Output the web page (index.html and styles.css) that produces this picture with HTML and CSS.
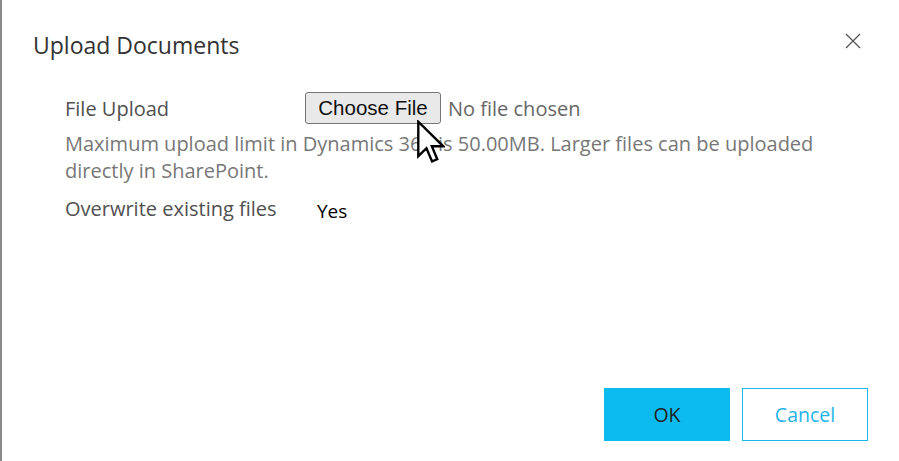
FILE: index.html
```html
<!DOCTYPE html>
<html>
<head>
<meta charset="utf-8">
<link rel="stylesheet" href="styles.css">
</head>
<body>
<div class="dialog">
  <div class="header">
    <h1 class="title">Upload Documents</h1>
    <button class="close" aria-label="Close">
      <svg width="16" height="16" viewBox="0 0 16 16"><path d="M1 1 L15 15 M15 1 L1 15" stroke="#555" stroke-width="1.3" fill="none"/></svg>
    </button>
  </div>
  <div class="body">
    <div class="row upload-row">
      <div class="label">File Upload</div>
      <div class="file">
        <span class="choose">Choose File</span>
        <span class="nofile">No file chosen</span>
      </div>
    </div>
    <p class="help">Maximum upload limit in Dynamics 365 is 50.00MB. Larger files can be uploaded directly in SharePoint.</p>
    <div class="row overwrite-row">
      <div class="label">Overwrite existing files</div>
      <div class="value">Yes</div>
    </div>
  </div>
  <div class="footer">
    <button class="btn ok">OK</button>
    <button class="btn cancel">Cancel</button>
  </div>
  <svg class="cursor" width="28" height="44" viewBox="0 0 13 20"><path d="M0.6 0.6 V16.6 L4.4 12.9 L7 19 L9.4 18 L6.9 12 H12.2 Z" fill="#fff" stroke="#000" stroke-width="1.1" stroke-linejoin="miter"/></svg>
</div>
</body>
</html>
```
FILE: styles.css
```css
html, body {
  margin: 0;
  padding: 0;
  background: #fff;
}
body {
  font-family: "Open Sans", "Noto Sans", sans-serif;
  width: 899px;
  height: 461px;
  overflow: hidden;
}
.dialog {
  position: relative;
  box-sizing: border-box;
  height: 461px;
  border-left: 2px solid #8a8a8a;
  display: flex;
  flex-direction: column;
}
.header {
  display: flex;
  justify-content: space-between;
  align-items: flex-start;
  padding: 30px 38px 0 31px;
}
.title {
  margin: 0;
  font-weight: 400;
  font-size: 23px;
  line-height: 30px;
  color: #333;
}
.close {
  border: 0;
  background: transparent;
  padding: 0;
  margin-top: 3px;
  width: 16px;
  height: 16px;
  display: block;
}
.close svg { display: block; }
.body {
  padding: 32px 0 0 63px;
  flex: 1;
}
.row {
  display: flex;
  align-items: center;
}
.label {
  width: 240px;
  font-size: 20px;
  color: #505050;
}
.file {
  display: flex;
  align-items: center;
  gap: 7px;
}
.choose {
  box-sizing: border-box;
  height: 32px;
  width: 136px;
  border: 1px solid #767676;
  border-radius: 3px;
  background: #e9e9e9;
  font-family: "Liberation Sans", Arial, sans-serif;
  font-size: 20.5px;
  color: #111;
  display: flex;
  align-items: center;
  justify-content: center;
}
.nofile {
  font-size: 20px;
  color: #666;
}
.help {
  margin: 6px 0 0 0;
  font-size: 20px;
  line-height: 27px;
  color: #777;
  width: 760px;
}
.overwrite-row {
  margin-top: 11px;
  align-items: flex-start;
}
.value {
  margin-left: 12px;
  margin-top: 3px;
  font-size: 19px;
  color: #000;
}
.footer {
  display: flex;
  justify-content: flex-end;
  gap: 12px;
  padding: 0 31px 20px 0;
}
.btn {
  box-sizing: border-box;
  width: 126px;
  height: 53px;
  font-family: "Open Sans", "Noto Sans", sans-serif;
  font-size: 19.5px;
  padding: 0;
}
.ok {
  background: #0bbbef;
  border: 0;
  color: #222;
}
.cancel {
  background: #fff;
  border: 1px solid #1ab9ec;
  color: #1fb4ea;
}
.cursor {
  position: absolute;
  left: 415px;
  top: 120px;
}
```
